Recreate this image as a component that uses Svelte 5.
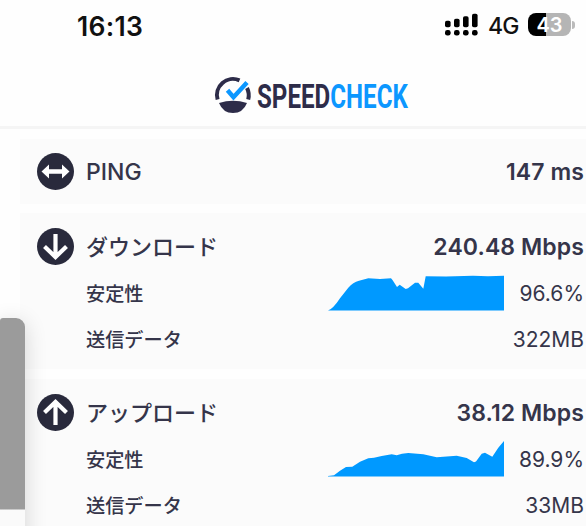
<script lang="ts">
	interface Transfer {
		id: string;
		label: string;
		speed: string;
		stability: string;
		amount: string;
		arrow: string;
		chart: string;
	}

	const transfers: Transfer[] = [
		{
			id: 'download',
			label: 'ダウンロード',
			speed: '240.48 Mbps',
			stability: '96.6%',
			amount: '322MB',
			arrow: 'M18.5 6v22M7.5 18.5l11 10.5 11-10.5',
			chart: 'M0 35.5 Q5 34 12 23.3 L20.3 12.7 Q25 7.5 31 5.8 L40.3 3.3 52 4 63 3.3 64.5 5 69 12 71.7 9.7 77.7 14 80 13.3 87 7.7 90.3 7.7 95.3 13.7 97.7 1.3 118 1.6 145 .8 160 1.3 176 .7V35.5z'
		},
		{
			id: 'upload',
			label: 'アップロード',
			speed: '38.12 Mbps',
			stability: '89.9%',
			amount: '33MB',
			arrow: 'M18.5 31V9M7.5 18.5l11-10.5 11 10.5',
			chart: 'M0 35 L6 34.3 12 29.7 18 26 24.3 25.7 32 20.7 40.3 17.3 46 16.7 53.7 15 63.7 13.3 68.7 14.3 74 12.8 80.3 12 95.3 13.3 108.7 16.3 128.7 14.7 138.7 17 146 21.3 148 20.5 153.7 12.7 157 11.7 164.3 15.7 170.3 6.7 176 0V35.5H0z'
		}
	];

	const bars = [6.5, 8.5, 11, 13.5];
</script>

<div class="screen">
	<header>
		<div class="status-bar">
			<span class="time">16:13</span>
			<div class="status-icons">
				<svg class="signal" width="34" height="24" viewBox="0 0 34 24">
					{#each bars as height, i}
						<rect x={i * 9} y={14.2 - height} width="5.6" {height} rx="1.8" />
						<rect x={i * 9} y="17" width="5.6" height="5.6" rx="2.3" />
					{/each}
				</svg>
				<span class="network">4G</span>
				<div class="battery">
					<span class="battery-body">43</span>
					<span class="battery-cap"></span>
				</div>
			</div>
		</div>
		<div class="brand">
			<svg width="38" height="38" viewBox="0 0 38 38">
				<path class="ring" d="M3.6 23.5A16 16 0 0 1 25.5 4.4M33 12a16 16 0 0 1 1.2 11.5" />
				<path class="base" d="M5 27q14-4.5 28 0-4 10-14 10T5 27z" />
				<path class="check" d="M13.5 14.2l6 7L33 6.5" />
			</svg>
			<div class="wordmark">SPEED<span class="blue">CHECK</span></div>
		</div>
	</header>

	<main>
		<section class="card ping">
			<div class="row head">
				<svg class="icon" width="37" height="37" viewBox="0 0 37 37">
					<circle cx="18.5" cy="18.5" r="18.5" />
					<path class="wide" d="M8 18.5h21" />
					<path class="tips" d="M4.5 18.5l7.5-7v14zM32.5 18.5l-7.5-7v14z" />
				</svg>
				<span class="label latin">PING</span>
				<span class="value">147 ms</span>
			</div>
		</section>

		{#each transfers as item (item.id)}
			<section class="card">
				<div class="row head">
					<svg class="icon" width="37" height="37" viewBox="0 0 37 37">
						<circle cx="18.5" cy="18.5" r="18.5" />
						<path d={item.arrow} />
					</svg>
					<span class="label">{item.label}</span>
					<span class="value">{item.speed}</span>
				</div>
				<div class="row detail">
					<span class="label">安定性</span>
					<svg class="chart" width="176" height="36" viewBox="0 0 176 36">
						<path d={item.chart} />
					</svg>
					<span class="value percent">{item.stability}</span>
				</div>
				<div class="row detail">
					<span class="label">送信データ</span>
					<span class="value">{item.amount}</span>
				</div>
			</section>
		{/each}
	</main>

	<div class="side-sheet"></div>
</div>

<style>
	:global(body) {
		background: #fefefe;
	}

	.screen {
		position: relative;
		width: 586px;
		height: 526px;
		overflow: hidden;
		box-sizing: border-box;
		font-family: Inter, 'Noto Sans CJK JP', sans-serif;
		color: #35354a;
		white-space: nowrap;
	}

	header {
		height: 129px;
		box-sizing: border-box;
		border-bottom: 3px solid #f5f5f5;
	}

	.status-bar {
		height: 52px;
		padding: 0 11px 0 77px;
		box-sizing: border-box;
		display: flex;
		align-items: center;
		justify-content: space-between;
		color: #111;
	}

	.time {
		font-size: 26.5px;
		font-weight: 600;
		letter-spacing: 0.3px;
		padding-bottom: 1px;
	}

	.status-icons {
		display: flex;
		align-items: center;
		padding-bottom: 3px;
	}

	.signal {
		fill: #000;
	}

	.network {
		margin-left: 9px;
		width: 40px;
		font-size: 23px;
		font-weight: 500;
		letter-spacing: -0.8px;
		padding-top: 3px;
	}

	.battery {
		display: flex;
		align-items: center;
		gap: 1px;
	}

	.battery-body {
		width: 43px;
		height: 23px;
		border-radius: 8px;
		background: linear-gradient(90deg, #000 43%, #b5b5b5 43%);
		color: #fff;
		font-size: 20px;
		font-weight: 600;
		line-height: 24px;
		text-align: center;
	}

	.battery-cap {
		width: 3px;
		height: 8px;
		border-radius: 0 3px 3px 0;
		background: #bbb;
	}

	.brand {
		height: 38px;
		margin: 24px 0 0 214px;
		display: flex;
		align-items: center;
		gap: 5px;
	}

	.brand path {
		fill: none;
	}

	.brand .ring {
		stroke: #2d2c49;
		stroke-width: 4;
	}

	.brand .base {
		fill: #2d2c49;
	}

	.brand .check {
		stroke: #0c97ff;
		stroke-width: 4.5;
	}

	/* squeezed to get condensed lettering */
	.wordmark {
		font-family: Roboto, sans-serif;
		font-size: 34px;
		font-weight: 700;
		line-height: 40px;
		padding-top: 1px;
		color: #2d2c49;
		transform: scaleX(0.71);
		transform-origin: left center;
	}

	.wordmark .blue {
		color: #0c97ff;
	}

	main {
		padding: 10px 0 0 20px;
		display: flex;
		flex-direction: column;
		gap: 10px;
	}

	.card {
		height: 156px;
		box-sizing: border-box;
		padding: 10px 2px 0 17px;
		background: #fbfbfb;
	}

	.card.ping {
		height: 65px;
		padding-top: 9px;
		margin-bottom: -1px;
	}

	.row {
		display: flex;
		align-items: center;
		height: 46px;
	}

	.head {
		height: 47px;
		font-size: 22px;
		font-weight: 500;
	}

	.head .label {
		padding-bottom: 4px;
	}

	.detail {
		padding-left: 49px;
		font-size: 19.2px;
	}

	.detail .label {
		font-weight: 500;
	}

	.icon {
		margin-right: 12px;
		fill: #292a3c;
	}

	.icon path {
		fill: none;
		stroke: #fff;
		stroke-width: 4.2;
	}

	.icon .wide {
		stroke-width: 4.5;
	}

	.icon .tips {
		fill: #fff;
		stroke: none;
	}

	.head .latin {
		font-size: 23px;
		padding-bottom: 0;
	}

	.value {
		margin-left: auto;
		font-size: 23px;
	}

	.head .value {
		font-weight: 600;
		letter-spacing: 0.1px;
	}

	.detail .value {
		font-size: 21px;
	}

	.chart {
		margin-left: auto;
		fill: #0099ff;
	}

	.detail .percent {
		width: 80px;
		margin-left: 0;
		text-align: right;
	}

	/* sheet sliding in over the left edge */
	.side-sheet {
		position: absolute;
		left: 0;
		top: 318px;
		width: 25px;
		height: 230px;
		border-radius: 3px 9px 0 0;
		background: linear-gradient(#9b9b9b 191px, #fafafa 192px);
		box-shadow: 0 4px 22px rgba(0, 0, 0, 0.16);
	}
</style>
